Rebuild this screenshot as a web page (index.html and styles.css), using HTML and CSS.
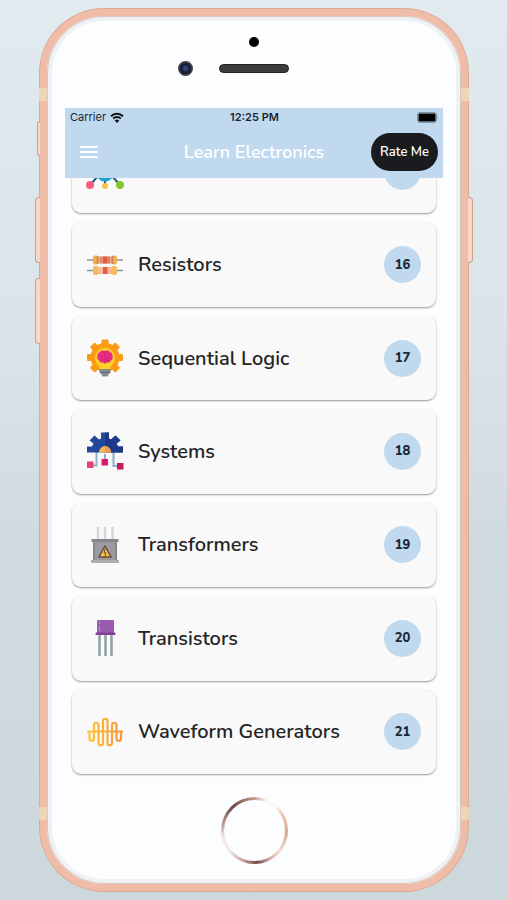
FILE: index.html
```html
<!DOCTYPE html>
<html lang="en">
<head>
  <meta charset="UTF-8">
  <meta name="viewport" content="width=device-width, initial-scale=1.0">
  <title>Learn Electronics</title>
  <link rel="stylesheet" href="styles.css">
</head>
<body>
  <div class="phone">
    <!-- Side buttons and antenna lines -->
    <span class="side-button mute"></span>
    <span class="side-button volume-up"></span>
    <span class="side-button volume-down"></span>
    <span class="side-button power"></span>
    <span class="antenna antenna-top"></span>
    <span class="antenna antenna-bottom"></span>

    <!-- Camera and speaker -->
    <div class="phone-top">
      <span class="sensor"></span>
      <div class="speaker-row">
        <span class="camera"></span>
        <span class="speaker"></span>
      </div>
    </div>

    <div class="screen">
      <!-- Header -->
      <header class="header">
        <div class="status-bar">
          <div class="carrier">
            <span>Carrier</span>
            <svg class="wifi" viewBox="0 0 14 11">
              <path d="M1 4.2a8.6 8.6 0 0 1 12 0M3.2 6.5a5.4 5.4 0 0 1 7.6 0" fill="none" stroke="#0b0f14" stroke-width="1.9"/>
              <path d="M7 11L4.7 8.5a3.3 3.3 0 0 1 4.6 0z" fill="#0b0f14"/>
            </svg>
          </div>
          <span class="time">12:25 PM</span>
          <svg class="battery" viewBox="0 0 22 11">
            <rect x="0.5" y="0.5" width="19" height="10" rx="2.5" fill="none" stroke="#7e93a8"/>
            <rect x="1.5" y="1.5" width="17" height="8" rx="1" fill="#000000"/>
            <path d="M20.5 3.8q1.5 1.7 0 3.4z" fill="#7e93a8"/>
          </svg>
        </div>
        <div class="nav-bar">
          <button class="menu-button" aria-label="Menu">
            <svg viewBox="0 0 18 14">
              <path d="M1 2h16M1 7h16M1 12h16" stroke="#ffffff" stroke-width="2" stroke-linecap="round"/>
            </svg>
          </button>
          <h1 class="title">Learn Electronics</h1>
          <button class="rate-button">Rate Me</button>
        </div>
      </header>

      <!-- Topics -->
      <main class="topics">
        <a class="card" href="#">
          <svg class="icon" viewBox="0 0 38 38">
            <path d="M12 24L4 33M19 26v8M26 24l8 9" stroke="#17657f" stroke-width="2"/>
            <path d="M10 20h18v4l-4 4q-5 3-10 0l-4-4z" fill="#1e9fd4"/>
            <circle cx="4" cy="33" r="4" fill="#f4607c"/>
            <circle cx="19" cy="34" r="3" fill="#f7c23c"/>
            <circle cx="34" cy="33" r="4" fill="#86c82c"/>
          </svg>
          <span class="name"></span>
          <span class="badge"></span>
        </a>
        <a class="card" href="#resistors">
          <svg class="icon" viewBox="0 0 38 38">
            <path d="M1 14h36M1 24.5h36" stroke="#87979f" stroke-width="1.5"/>
            <rect x="11" y="10.5" width="16" height="7" fill="#e8a27c"/>
            <rect x="11" y="21" width="16" height="7" fill="#f6bc98"/>
            <rect x="7" y="9.5" width="5.5" height="9" rx="2" fill="#f0ae4c"/>
            <rect x="25.5" y="9.5" width="5.5" height="9" rx="2" fill="#f0ae4c"/>
            <rect x="7" y="20" width="5.5" height="9" rx="2" fill="#f5b95e"/>
            <rect x="25.5" y="20" width="5.5" height="9" rx="2" fill="#f5b95e"/>
            <path d="M11.5 10v8M26.5 10v8" stroke="#c98465" stroke-width="1.5"/>
            <path d="M15.5 10.5v7M23 10.5v7" stroke="#df8468" stroke-width="2"/>
            <rect x="17" y="10.5" width="4.5" height="7" fill="#e9594d"/>
            <rect x="17" y="21" width="4.5" height="7" fill="#e95a4c"/>
          </svg>
          <span class="name">Resistors</span>
          <span class="badge">16</span>
        </a>
        <a class="card" href="#sequential-logic">
          <svg class="icon" viewBox="0 0 38 38">
            <g fill="#fb9a14">
              <circle cx="19" cy="18.5" r="14.5"/>
              <rect x="15.5" y="0.5" width="7" height="36" rx="1"/>
              <rect x="15.5" y="0.5" width="7" height="36" rx="1" transform="rotate(45 19 18.5)"/>
              <rect x="15.5" y="0.5" width="7" height="36" rx="1" transform="rotate(90 19 18.5)"/>
              <rect x="15.5" y="0.5" width="7" height="36" rx="1" transform="rotate(135 19 18.5)"/>
            </g>
            <path d="M14 31q0-3-2-5a10 10 0 1 1 14 0q-2 2-2 5z" fill="#fdd128"/>
            <path d="M18.5 12q-3-2-4.5 1-3 1-2.5 4-1 3 1.5 4.5 1.5 3 4.5 2l1.5 1.5 1.5-1.5q3 1 4.5-2 2.5-1.5 1.5-4.5 0.5-3-2.5-4-2-3-5.5-1z" fill="#e92c86"/>
            <path d="M19 12v12M14 17l3 1M24 17l-3 2M15 21l2-1M23 22l-2-1" stroke="#cb2373"/>
            <path d="M13.5 30h11v4l-2 1-1 2.5h-5l-1-2.5-2-1z" fill="#858b91"/>
            <path d="M14 33.5h10" stroke="#656b72"/>
          </svg>
          <span class="name">Sequential Logic</span>
          <span class="badge">17</span>
        </a>
        <a class="card" href="#systems">
          <svg class="icon" viewBox="0 0 38 38">
            <path d="M10.5 20v13.5H5M19 22v8M27.5 20v14H34" fill="none" stroke="#8bb0ca" stroke-width="2"/>
            <path d="M1 20.5v-6h5l1.5-3-4-3L8.500 3.500l4.500 4 2-1v-6h8v6l2 1 4.500-4 5 5-4 3 1.500 3h5v6z" fill="#23479a"/>
            <path d="M19 0.500h4v6l2 1 4.500-4 5 5-4 3 1.500 3h5v6H19z" fill="#1c3b87"/>
            <path d="M13 20.500a6 6.500 0 0 1 12 0z" fill="#f7b659"/>
            <path d="M19 14a6 6.500 0 0 1 6 6.500h-6z" fill="#ee9c52"/>
            <rect x="1" y="29.5" width="6.5" height="6.5" fill="#e8416e"/>
            <rect x="15.5" y="27" width="6.5" height="6.5" fill="#d51e65"/>
            <rect x="31" y="31" width="6.5" height="6.5" fill="#c6185c"/>
          </svg>
          <span class="name">Systems</span>
          <span class="badge">18</span>
        </a>
        <a class="card" href="#transformers">
          <svg class="icon" viewBox="0 0 38 38">
            <path d="M12 1v12M19 1v12M26.5 1v12" stroke="#d5d6d9" stroke-width="2.5"/>
            <rect x="7" y="14" width="24" height="20" fill="#9a9aa0"/>
            <path d="M5.500 13h27v3h-27z" fill="#85858c"/>
            <path d="M7 16h2v18H7zM29 16h2v18h-2z" fill="#85858c"/>
            <rect x="5" y="34" width="28" height="3" fill="#adadb2"/>
            <path d="M19 20l6 11H13z" fill="#f7c846" stroke="#65483b" stroke-width="1.5" stroke-linejoin="round"/>
            <path d="M19 23l-1 4h2l-1 3" fill="none" stroke="#65483b"/>
          </svg>
          <span class="name">Transformers</span>
          <span class="badge">19</span>
        </a>
        <a class="card" href="#transistors">
          <svg class="icon" viewBox="0 0 38 38">
            <path d="M13.5 16v21M19.500 16v21M25.500 16v21" stroke="#8da09f" stroke-width="2.5"/>
            <rect x="11" y="1" width="17" height="14" rx="1" fill="#995bae"/>
            <rect x="9.5" y="13.5" width="20" height="2.5" rx="1" fill="#81409a"/>
            <path d="M13.5 3v2M13.5 7v5" stroke="#c795d3"/>
          </svg>
          <span class="name">Transistors</span>
          <span class="badge">20</span>
        </a>
        <a class="card" href="#waveform-generators">
          <svg class="icon" viewBox="0 0 38 38">
            <defs>
              <linearGradient id="wave" gradientUnits="userSpaceOnUse" x1="1" y1="0" x2="37" y2="0">
                <stop offset="0" stop-color="#fcc934"/>
                <stop offset="1" stop-color="#f7943f"/>
              </linearGradient>
            </defs>
            <path d="M1 18.5h36M3.500 18.500v7a2.200 2.200 0 0 0 4.500 0V12a2.200 2.200 0 0 1 4.500 0v18a2.200 2.200 0 0 0 4.500 0V8a2.200 2.200 0 0 1 4.500 0v22a2.200 2.200 0 0 0 4.500 0V12a2.200 2.200 0 0 1 4.500 0v13.500a2.200 2.200 0 0 0 4.500 0v-7" fill="none" stroke="url(#wave)" stroke-width="2.2"/>
          </svg>
          <span class="name">Waveform Generators</span>
          <span class="badge">21</span>
        </a>
      </main>
    </div>

    <!-- Home button -->
    <button class="home-button" aria-label="Home"></button>
  </div>
</body>
</html>
```

FILE: styles.css
```css
* {
  box-sizing: border-box;
}

body {
  margin: 0;
  padding: 9px 39px 9px 40px;
  min-height: 100vh;
  display: flex;
  font-family: "Nunito", "Noto Sans", sans-serif;
  background: linear-gradient(#e1eaef, #dbe5e9 35%, #d0dae1 60%, #cdd8dd);
}

button {
  padding: 0;
  border: none;
  font-family: inherit;
  cursor: pointer;
}

/* Phone frame */
.phone {
  position: relative;
  flex: 1;
  min-width: 0;
  display: flex;
  flex-direction: column;
  padding: 0 18px 20px;
  border: 7px solid #efbda7;
  border-radius: 64px;
  background-color: #fbfdfe;
  box-shadow: inset 0 0 0 1px #d8c8c2, inset 0 0 0 5px #eff1f4, 0 0 0 1px #dba994;
}

.side-button {
  position: absolute;
  left: -12px;
  width: 5px;
  height: 66px;
  border: 1px solid #d59e88;
  border-right: none;
  border-radius: 4px 0 0 4px;
  background-color: #f7d9cc;
}

.mute {
  top: 105px;
  left: -10px;
  width: 3px;
  height: 35px;
}

.volume-up {
  top: 181px;
}

.volume-down {
  top: 262px;
}

.power {
  top: 181px;
  left: auto;
  right: -12px;
  border: 1px solid #d59e88;
  border-left: none;
  border-radius: 0 4px 4px 0;
}

.antenna {
  position: absolute;
  left: -8px;
  right: -8px;
  height: 13px;
  border: solid #edd5b9;
  border-width: 0 8px;
}

.antenna-top {
  top: 72px;
}

.antenna-bottom {
  bottom: 64px;
}

.phone-top {
  height: 92px;
  padding-top: 21px;
  display: flex;
  flex-direction: column;
  align-items: center;
  gap: 14px;
}

.sensor {
  width: 10px;
  height: 10px;
  border-radius: 50%;
  background-color: #000000;
}

.speaker-row {
  width: 100%;
  display: grid;
  grid-template-columns: 1fr auto 1fr;
  column-gap: 26px;
  align-items: center;
}

.camera {
  justify-self: end;
  width: 15px;
  height: 15px;
  border: 2px solid #3d3f43;
  border-radius: 50%;
  background: radial-gradient(#3b5597, #12182a 60%);
}

.speaker {
  width: 70px;
  height: 9px;
  border: 1px solid #202123;
  border-radius: 5px;
  background-color: #3a3b3d;
}

/* Screen */
.screen {
  flex: 1;
  display: flex;
  flex-direction: column;
  background-color: #fdfdfd;
}

.header {
  position: relative;
  z-index: 1;
  height: 70px;
  background-color: #c0d9ef;
}

.status-bar {
  height: 18px;
  padding: 0 4px 0 5px;
  display: grid;
  grid-template-columns: 1fr auto 1fr;
  align-items: center;
  font-family: "Inter", sans-serif;
  font-size: 11px;
  color: #1b2530;
}

.carrier {
  display: flex;
  align-items: center;
  gap: 4px;
}

.wifi {
  width: 14px;
  height: 11px;
}

.time {
  font-weight: 600;
}

.battery {
  justify-self: end;
  width: 22px;
  height: 11px;
}

.nav-bar {
  height: 52px;
  padding: 0 5px;
  display: grid;
  grid-template-columns: 1fr auto 1fr;
  align-items: center;
}

.menu-button {
  justify-self: start;
  margin-left: 10px;
  width: 18px;
  height: 24px;
  display: flex;
  align-items: center;
  background: none;
}

.menu-button svg {
  width: 18px;
  height: 14px;
}

.title {
  margin: 0;
  font-size: 18px;
  font-weight: 600;
  color: #ffffff;
}

.rate-button {
  justify-self: end;
  width: 67px;
  height: 38px;
  border-radius: 19px;
  font-size: 13px;
  font-weight: 600;
  color: #ffffff;
  background-color: #191b1e;
}

/* Topic cards */
.topics {
  flex: 1;
  margin-top: -49px;
  padding: 0 7px 6px;
  display: flex;
  flex-direction: column;
  gap: 9px;
}

.card {
  flex: 1;
  min-height: 84px;
  padding: 0 15px 0 14px;
  display: flex;
  align-items: center;
  gap: 14px;
  border-radius: 9px;
  color: #242424;
  text-decoration: none;
  background-color: #f9f9f9;
  box-shadow: 0 1px 2px rgba(0, 0, 0, 0.4);
}

.icon {
  flex: none;
  width: 38px;
  height: 38px;
}

.name {
  flex: 1;
  font-size: 20px;
  font-weight: 600;
}

.badge {
  width: 37px;
  height: 37px;
  display: flex;
  align-items: center;
  justify-content: center;
  border-radius: 50%;
  font-size: 13px;
  font-weight: 800;
  color: #1c2a38;
  background-color: #c0d9ef;
}

/* Home button */
.home-button {
  align-self: center;
  width: 67px;
  height: 67px;
  margin-top: 17px;
  border: 3px solid transparent;
  border-radius: 50%;
  background:
    linear-gradient(#fbfdfe, #fbfdfe) padding-box,
    conic-gradient(#c79a92, #f8f3f2 20deg, #fbfdfe 40deg, #efc4ad 60deg, #d9a794 95deg, #f3dcd3 130deg, #d9b3a8 150deg, #6e4a46 175deg, #c99c92 200deg, #f4ecee 230deg, #f1e4e6 260deg, #b98d88 285deg, #6e4a46 318deg, #c79a92 360deg) border-box;
}
```
